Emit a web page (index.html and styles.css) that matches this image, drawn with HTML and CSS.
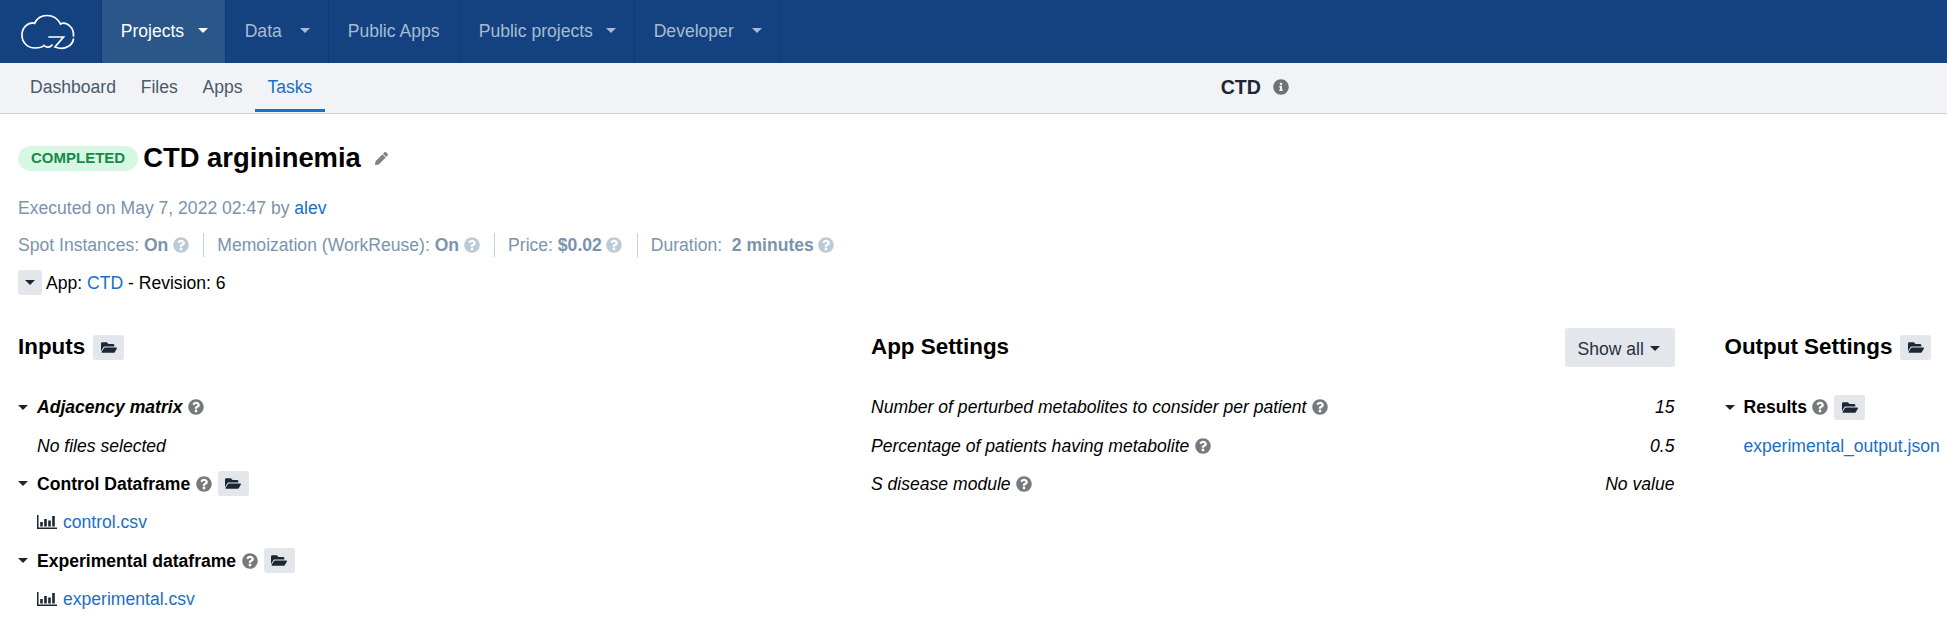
FILE: index.html
```html
<!DOCTYPE html>
<html lang="en">
<head>
<meta charset="utf-8">
<title>CTD argininemia</title>
<link rel="stylesheet" href="styles.css">
</head>
<body>
<svg class="defs" width="0" height="0" aria-hidden="true">
  <symbol id="i-folder" viewBox="0 0 576 512"><path d="M572.694 292.093L500.27 416.248A63.997 63.997 0 0 1 444.989 448H45.025c-18.523 0-30.064-20.093-20.731-36.093l72.424-124.155A64 64 0 0 1 152 256h399.964c18.523 0 30.064 20.093 20.73 36.093zM152 224h328v-48c0-26.51-21.49-48-48-48H272l-64-64H48C21.49 64 0 85.49 0 112v278.046l69.077-118.418C86.214 242.25 117.989 224 152 224z"/></symbol>
  <symbol id="i-help" viewBox="0 0 512 512"><path d="M504 256c0 136.997-111.043 248-248 248S8 392.997 8 256C8 119.083 119.043 8 256 8s248 111.083 248 248zM262.655 90c-54.497 0-89.255 22.957-116.549 63.758-3.536 5.286-2.353 12.415 2.715 16.258l34.699 26.31c5.205 3.947 12.621 3.008 16.665-2.122 17.864-22.658 30.113-35.797 57.303-35.797 20.429 0 45.698 13.148 45.698 32.958 0 14.976-12.363 22.667-32.534 33.976C247.128 238.528 216 254.941 216 296v4c0 6.627 5.373 12 12 12h56c6.627 0 12-5.373 12-12v-1.333c0-28.462 83.186-29.647 83.186-106.667 0-58.002-60.165-102-116.531-102zM256 338c-25.365 0-46 20.635-46 46 0 25.364 20.635 46 46 46s46-20.636 46-46c0-25.365-20.635-46-46-46z"/></symbol>
  <symbol id="i-info" viewBox="0 0 512 512"><path d="M256 8C119.043 8 8 119.083 8 256c0 136.997 111.043 248 248 248s248-111.003 248-248C504 119.083 392.957 8 256 8zm0 110c23.196 0 42 18.804 42 42s-18.804 42-42 42-42-18.804-42-42 18.804-42 42-42zm56 254c0 6.627-5.373 12-12 12h-88c-6.627 0-12-5.373-12-12v-24c0-6.627 5.373-12 12-12h12v-64h-12c-6.627 0-12-5.373-12-12v-24c0-6.627 5.373-12 12-12h64c6.627 0 12 5.373 12 12v100h12c6.627 0 12 5.373 12 12v24z"/></symbol>
  <symbol id="i-pencil" viewBox="0 0 512 512"><path d="M497.9 142.1l-46.1 46.1c-4.7 4.7-12.3 4.7-17 0l-111-111c-4.7-4.7-4.7-12.3 0-17l46.1-46.1c18.7-18.7 49.1-18.7 67.9 0l60.1 60.1c18.8 18.7 18.8 49.1 0 67.9zM284.2 99.8L21.6 362.4.4 483.9c-2.9 16.4 11.4 30.6 27.8 27.8l121.5-21.3 262.6-262.6c4.7-4.7 4.7-12.3 0-17l-111-111c-4.8-4.7-12.4-4.7-17.1 0z"/></symbol>
  <symbol id="i-chart" viewBox="0 0 20 14"><path d="M0 0h1.500v12.500H20V14H0z"/><path d="M3.200 7h2.600v4.500H3.200zM7.200 4h2.600v7.500H7.200zM11.200 5.500h2.600v6h-2.600zM15.200 1h2.600v10.500h-2.600z"/></symbol>
</svg>

<nav class="topnav">
  <a class="logo" href="#" aria-label="Home">
    <svg width="56" height="38" viewBox="21 14 56 38" fill="none" stroke="#fff" stroke-width="1.7" stroke-linecap="round">
      <path d="M34.500 23C27 22.500 22 28 22 35C22 43 28 48 35 48C39 48 42 47.500 44 45.500C46 47.500 50 48 52 45"/>
      <path d="M34.500 23.500C37 18 42 15.500 47 15.500C53 15.500 58 19 60.500 24C62 23 65 23 67 24C71 26 74 30 73.500 36"/>
      <path d="M49 37H63.500L55 47C59 48.500 64 49 68 46.500C71 45 73 42 73.500 39"/>
    </svg>
  </a>
  <a class="nav-item nav-projects is-active" href="#">Projects<span class="nav-caret"></span></a>
  <a class="nav-item nav-data" href="#">Data<span class="nav-caret nav-caret-far"></span></a>
  <a class="nav-item nav-apps" href="#">Public Apps</a>
  <a class="nav-item nav-public" href="#">Public projects<span class="nav-caret"></span></a>
  <a class="nav-item nav-dev" href="#">Developer<span class="nav-caret nav-caret-far"></span></a>
</nav>

<div class="subnav">
  <div class="tabs">
    <a class="tab" href="#">Dashboard</a>
    <a class="tab" href="#">Files</a>
    <a class="tab" href="#">Apps</a>
    <a class="tab is-current" href="#">Tasks</a>
  </div>
  <div class="project-name">CTD <svg class="icon-info"><use href="#i-info"/></svg></div>
</div>

<main class="page">
  <header class="task-head">
    <div class="title-row">
      <span class="badge">COMPLETED</span>
      <h1 class="task-title">CTD argininemia</h1>
      <svg class="icon-pencil"><use href="#i-pencil"/></svg>
    </div>
    <p class="executed">Executed on May 7, 2022 02:47 by <a href="#">alev</a></p>
    <div class="stats">
      <span class="stat">Spot Instances:&nbsp;<b>On</b><svg class="icon-help-light"><use href="#i-help"/></svg></span>
      <span class="stat">Memoization (WorkReuse):&nbsp;<b>On</b><svg class="icon-help-light"><use href="#i-help"/></svg></span>
      <span class="stat">Price:&nbsp;<b>$0.02</b><svg class="icon-help-light"><use href="#i-help"/></svg></span>
      <span class="stat">Duration:&nbsp;&nbsp;<b>2 minutes</b><svg class="icon-help-light"><use href="#i-help"/></svg></span>
    </div>
    <div class="app-row">
      <button class="toggle" type="button" aria-label="Toggle"><span class="caret"></span></button>
      <span>App: <a href="#">CTD</a> - Revision: 6</span>
    </div>
  </header>

  <div class="columns">
    <section>
      <div class="col-head">
        <h2>Inputs</h2>
        <button class="folder-btn" type="button" aria-label="Open"><svg class="icon-folder"><use href="#i-folder"/></svg></button>
      </div>
      <div class="rows">
        <div class="row"><span class="caret"></span><strong class="label"><em>Adjacency matrix</em></strong><svg class="icon-help"><use href="#i-help"/></svg></div>
        <div class="row row-sub"><em>No files selected</em></div>
        <div class="row"><span class="caret"></span><strong class="label">Control Dataframe</strong><svg class="icon-help"><use href="#i-help"/></svg><button class="folder-btn" type="button" aria-label="Open"><svg class="icon-folder"><use href="#i-folder"/></svg></button></div>
        <div class="row row-sub"><svg class="icon-chart"><use href="#i-chart"/></svg><a href="#">control.csv</a></div>
        <div class="row"><span class="caret"></span><strong class="label">Experimental dataframe</strong><svg class="icon-help"><use href="#i-help"/></svg><button class="folder-btn" type="button" aria-label="Open"><svg class="icon-folder"><use href="#i-folder"/></svg></button></div>
        <div class="row row-sub"><svg class="icon-chart"><use href="#i-chart"/></svg><a href="#">experimental.csv</a></div>
      </div>
    </section>

    <section>
      <div class="col-head col-head-split">
        <h2>App Settings</h2>
        <button class="show-all" type="button">Show all<span class="caret"></span></button>
      </div>
      <div class="rows">
        <div class="row row-split"><span class="setting"><em>Number of perturbed metabolites to consider per patient</em><svg class="icon-help"><use href="#i-help"/></svg></span><em>15</em></div>
        <div class="row row-split"><span class="setting"><em>Percentage of patients having metabolite</em><svg class="icon-help"><use href="#i-help"/></svg></span><em>0.5</em></div>
        <div class="row row-split"><span class="setting"><em>S disease module</em><svg class="icon-help"><use href="#i-help"/></svg></span><em>No value</em></div>
      </div>
    </section>

    <section>
      <div class="col-head">
        <h2>Output Settings</h2>
        <button class="folder-btn" type="button" aria-label="Open"><svg class="icon-folder"><use href="#i-folder"/></svg></button>
      </div>
      <div class="rows">
        <div class="row"><span class="caret"></span><strong class="label">Results</strong><svg class="icon-help"><use href="#i-help"/></svg><button class="folder-btn" type="button" aria-label="Open"><svg class="icon-folder"><use href="#i-folder"/></svg></button></div>
        <div class="row row-sub"><a href="#">experimental_output.json</a></div>
      </div>
    </section>
  </div>
</main>
</body>
</html>
```
FILE: styles.css
```css
* { box-sizing: border-box; }
html, body { margin: 0; padding: 0; }
body {
  font-family: "Liberation Sans", Arial, sans-serif;
  font-size: 17.57px;
  line-height: 24px;
  color: #000;
  background: #fff;
  overflow: hidden;
  height: 620px;
}
a { color: #1a6fc4; text-decoration: none; }
button { font: inherit; border: 0; padding: 0; cursor: pointer; }
.defs { position: absolute; }

.topnav { display: flex; height: 63px; background: #144281; }
.logo {
  width: 102px;
  padding: 3px 0 0 21px;
  display: flex;
  align-items: center;
  border-right: 1px solid #103a72;
}
.nav-item {
  display: flex;
  align-items: center;
  padding: 0 0 2px 18.7px;
  color: #a8bbd3;
  border-right: 1px solid #103a72;
}
.nav-projects { width: 124px; }
.nav-data { width: 103px; }
.nav-apps { width: 131px; }
.nav-public { width: 175px; }
.nav-dev { width: 145px; }
.nav-item.is-active { background: #2a5689; color: #fff; }
.nav-caret {
  width: 0;
  height: 0;
  margin-left: 13.5px;
  border-left: 5px solid transparent;
  border-right: 5px solid transparent;
  border-top: 5px solid currentColor;
}
.nav-caret-far { margin-left: 18px; }

.subnav {
  display: flex;
  align-items: stretch;
  height: 51px;
  padding-left: 17.6px;
  background: #f1f3f7;
  border-bottom: 1px solid #ced3da;
}
.tabs { display: flex; }
.tab {
  display: flex;
  align-items: center;
  padding: 2px 12.4px 0;
  height: 49px;
  color: #4a5a6a;
  border-bottom: 3px solid transparent;
}
.tab.is-current { color: #1a6fc4; border-bottom-color: #1a6fc4; }
.project-name {
  display: flex;
  align-items: center;
  gap: 12px;
  margin-left: 896px;
  padding-bottom: 2px;
  font-size: 19.6px;
  font-weight: 700;
  color: #1c2733;
}
.icon-info { width: 16px; height: 16px; fill: #6f7275; }

.page { padding: 31px 0 0 18px; }
.title-row { display: flex; align-items: center; height: 26px; }
.badge {
  display: flex;
  align-items: center;
  height: 25px;
  padding: 0 13px;
  border-radius: 13px;
  background: #d6f7e4;
  color: #178a49;
  font-size: 15px;
  font-weight: 700;
}
.task-title { margin: 0 0 0 5px; font-size: 27.4px; line-height: 32px; font-weight: 700; }
.icon-pencil { width: 13px; height: 13px; margin-left: 14px; fill: #808285; }

.executed { margin: 25px 0 0; color: #7b93ab; }
.stats { display: flex; margin-top: 13px; color: #7b93ab; }
.stat { display: flex; align-items: center; height: 24px; }
.stat b { font-weight: 700; }
.stat + .stat { margin-left: 14.5px; padding-left: 13px; border-left: 1px solid #c5d0db; }
.icon-help-light { width: 16px; height: 16px; margin-left: 4.5px; fill: #bccad8; }

.app-row { display: flex; align-items: center; gap: 4px; margin-top: 13px; height: 25px; }
.toggle {
  display: flex;
  align-items: center;
  justify-content: center;
  width: 24px;
  height: 25px;
  border-radius: 3px;
  background: #e3e7ec;
}
.caret {
  display: inline-block;
  width: 0;
  height: 0;
  border-left: 5px solid transparent;
  border-right: 5px solid transparent;
  border-top: 5px solid #1d2630;
}

.columns {
  display: grid;
  grid-template-columns: 803px 803.5px 222px;
  column-gap: 50px;
  margin-top: 33px;
}
.col-head { display: flex; align-items: center; gap: 8px; height: 39px; }
.col-head-split { justify-content: space-between; }
h2 { margin: 0; padding-bottom: 2px; font-size: 22.4px; line-height: 28px; font-weight: 700; }
.folder-btn {
  display: flex;
  align-items: center;
  justify-content: center;
  width: 31px;
  height: 25px;
  border-radius: 3px;
  background: #e3e7ec;
}
.icon-folder { width: 16px; height: 15px; fill: #1c2733; }
.show-all {
  display: flex;
  align-items: center;
  gap: 6px;
  width: 110px;
  height: 39px;
  padding: 2px 0 0 13px;
  border-radius: 3px;
  background: #e3e7ec;
  color: #28323c;
}
.rows { margin-top: 21px; }
.row { display: flex; align-items: center; height: 38.4px; }
.row-sub { padding-left: 19px; }
.row-split { justify-content: space-between; }
.setting { display: flex; align-items: center; }
.label { margin-left: 9px; font-weight: 700; }
.icon-help { width: 16px; height: 16px; margin-left: 5.5px; margin-right: 6px; fill: #77797c; flex: none; }
.icon-chart { width: 20px; height: 14px; margin-right: 6px; fill: #1c2733; }
```
